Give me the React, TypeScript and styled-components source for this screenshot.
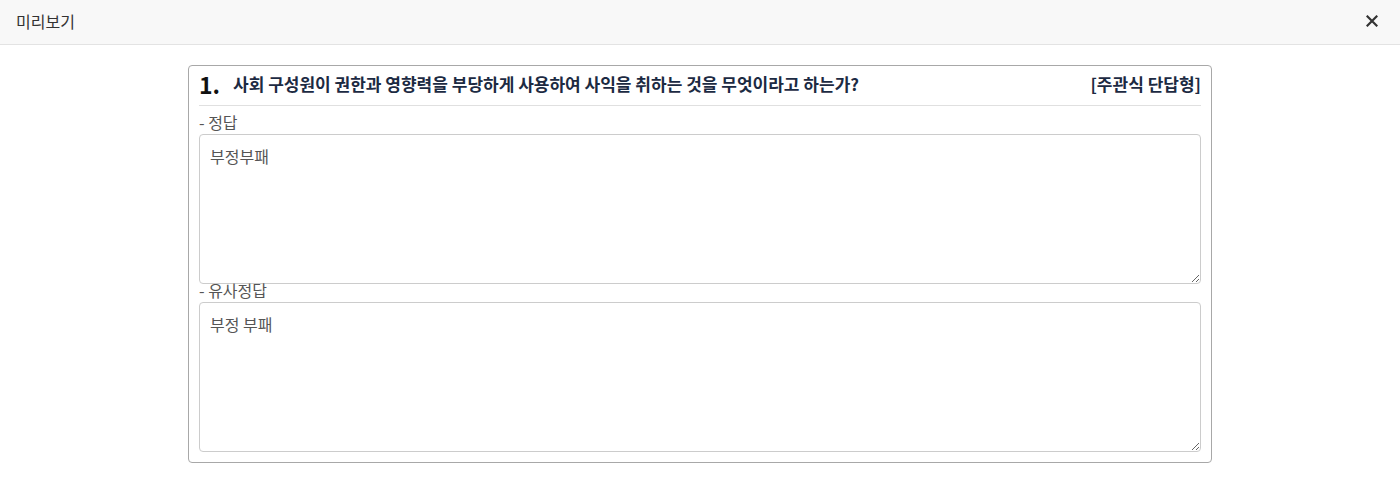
import styled, {createGlobalStyle} from 'styled-components';

const GlobalStyle = createGlobalStyle`
  * {
    box-sizing: border-box;
  }

  body {
    margin: 0;
    background: #fff;
    font-family: "Noto Sans CJK KR", "Noto Sans", sans-serif;
    color: #333;
  }
`

const answers = [
    {label: '- 정답', value: '부정부패'},
    {label: '- 유사정답', value: '부정 부패'},
]

export default function App() {
    return (
        <>
            <GlobalStyle/>
            <TopBar>
                <TopTitle>미리보기</TopTitle>
                <CloseButton aria-label="close">
                    <svg width="12" height="12" viewBox="0 0 12 12">
                        <path d="M1.5 1.5 L10.5 10.5 M10.5 1.5 L1.5 10.5" stroke="#333" strokeWidth="2.2"
                              strokeLinecap="square"/>
                    </svg>
                </CloseButton>
            </TopBar>
            <Body>
                <QuestionCard>
                    <QuestionHead>
                        <QNumber>1.</QNumber>
                        <QText>사회 구성원이 권한과 영향력을 부당하게 사용하여 사익을 취하는 것을 무엇이라고 하는가?</QText>
                        <QType>[주관식 단답형]</QType>
                    </QuestionHead>
                    <AnswerList>
                        {answers.map((a) => (
                            <AnswerBlock key={a.label}>
                                <AnswerLabel>{a.label}</AnswerLabel>
                                <AnswerArea readOnly defaultValue={a.value}/>
                            </AnswerBlock>
                        ))}
                    </AnswerList>
                </QuestionCard>
            </Body>
        </>
    );
}

const TopBar = styled.header`
  height: 45px;
  background: #f8f8f8;
  border-bottom: 1px solid #e3e3e3;
  display: flex;
  align-items: center;
  justify-content: space-between;
  padding: 0 16px 2px;
`

const TopTitle = styled.h1`
  margin: 0;
  font-size: 16px;
  font-weight: 400;
  color: #333;
`

const CloseButton = styled.button`
  border: none;
  background: none;
  padding: 0;
  width: 12px;
  height: 12px;
  display: flex;
  margin-right: 6px;
  cursor: pointer;
`

const Body = styled.main`
  padding-top: 20px;
`

const QuestionCard = styled.section`
  width: 1024px;
  margin: 0 auto;
  border: 1px solid #a8a8a8;
  border-radius: 4px;
  padding: 0 10px 10px;
`

const QuestionHead = styled.div`
  height: 40px;
  display: flex;
  align-items: center;
  border-bottom: 1px solid #e0e0e0;
  padding-bottom: 4px;
`

const QNumber = styled.span`
  font-size: 23px;
  font-weight: 700;
  color: #111;
  width: 34px;
`

const QText = styled.span`
  flex: 1;
  font-size: 17px;
  font-weight: 700;
  color: #1c2a42;
`

const QType = styled.span`
  font-size: 17px;
  font-weight: 700;
  color: #1c2a42;
`

const AnswerList = styled.div`
  padding-top: 10px;
`

const AnswerBlock = styled.div`
  display: flex;
  flex-direction: column;
`

const AnswerLabel = styled.span`
  font-size: 16px;
  line-height: 12px;
  padding-bottom: 6px;
  color: #555;
`

const AnswerArea = styled.textarea`
  width: 100%;
  height: 150px;
  border: 1px solid #ccc;
  border-radius: 4px;
  padding: 9px 10px;
  font-family: "Noto Sans CJK KR", "Noto Sans", sans-serif;
  font-size: 16px;
  line-height: 24px;
  color: #555;
  outline: none;
`
